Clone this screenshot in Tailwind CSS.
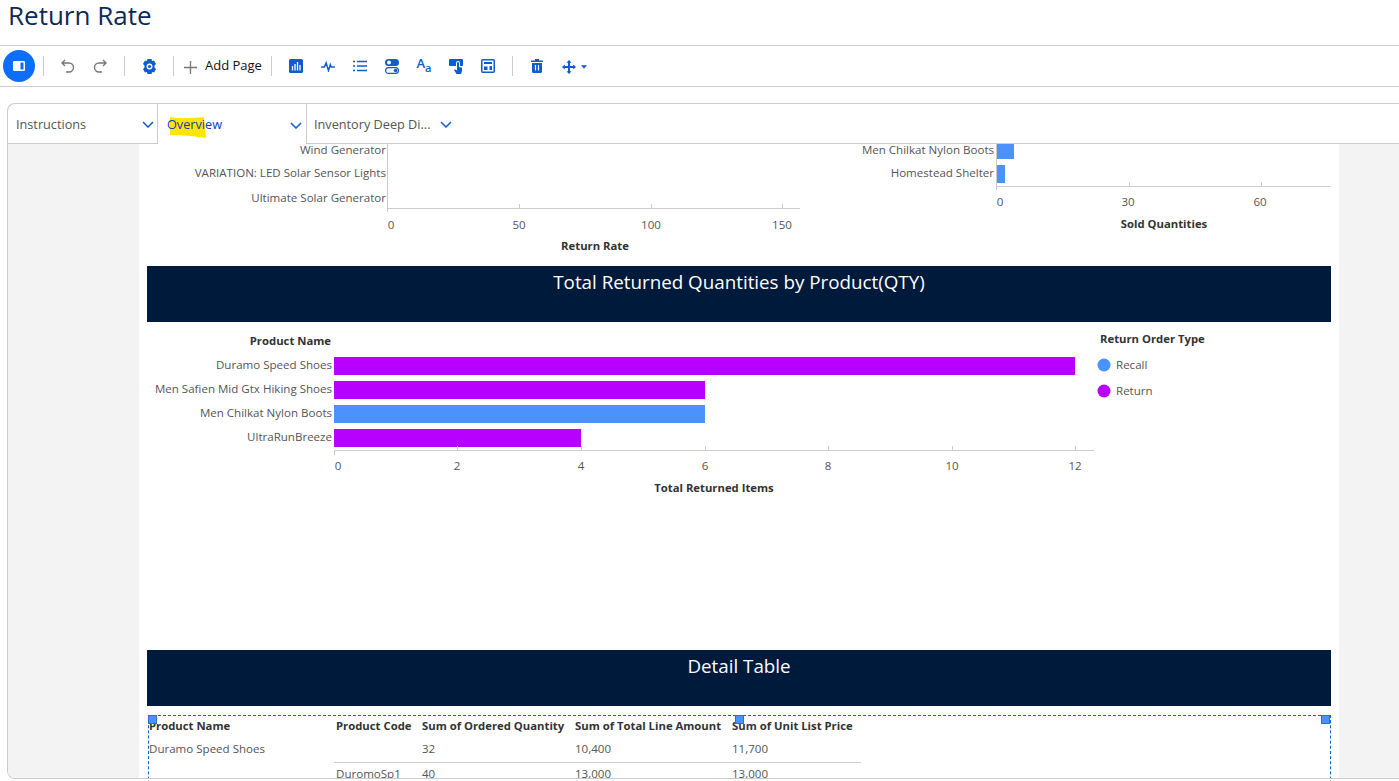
<!DOCTYPE html>
<html lang="en">
<head>
  <meta charset="UTF-8">
  <meta name="viewport" content="width=device-width, initial-scale=1.0">
  <title>Return Rate</title>
  <script src="https://cdn.jsdelivr.net/npm/@tailwindcss/browser@4"></script>
</head>
<body class="bg-white h-[781px] overflow-hidden font-['Open_Sans',sans-serif] text-[#555]">

  <!-- Title -->
  <div class="h-[46px] border-b border-[#ccc] pl-2 flex items-start">
    <h1 class="text-[26px] leading-[36px] -mt-[3px] text-[#0a2a57]">Return Rate</h1>
  </div>

  <!-- Toolbar -->
  <div class="h-[41px] border-b border-[#ccc] flex items-center pl-[3px]">
    <button class="w-8 h-8 rounded-full bg-[#0d6efd] flex items-center justify-center">
      <svg width="14" height="14" viewBox="0 0 14 14"><rect x="1" y="2" width="12" height="10" rx="1" fill="#fff"/><rect x="8.500" y="3.500" width="3" height="7" fill="#0d6efd"/></svg>
    </button>
    <div class="ml-2 w-px h-5 bg-[#ccc]"></div>
    <button class="ml-2 w-8 h-8 flex items-center justify-center">
      <svg width="16" height="16" viewBox="0 0 16 16" fill="none" stroke="#777" stroke-width="1.400"><path d="M5 2 2 5l3 3M2 5h7a4.500 4.500 0 0 1 0 9H6"/></svg>
    </button>
    <button class="w-8 h-8 flex items-center justify-center">
      <svg width="16" height="16" viewBox="0 0 16 16" fill="none" stroke="#777" stroke-width="1.400"><path d="M11 2l3 3-3 3M14 5H7a4.500 4.500 0 0 0 0 9h3"/></svg>
    </button>
    <div class="ml-2 w-px h-5 bg-[#ccc]"></div>
    <button class="ml-2 w-8 h-8 flex items-center justify-center">
      <svg width="13" height="15" viewBox="0 0 14 16"><path fill="#0f5bd0" d="M4.800 0h4.400l.5 2.200 2.200-.7L14 5.300l-1.600 1.600v2.200L14 10.700l-2.100 3.800-2.200-.7-.5 2.200H4.800l-.5-2.200-2.200.7L0 10.700l1.600-1.600V6.900L0 5.300l2.100-3.800 2.200.7z"/><circle cx="7" cy="8" r="3.200" fill="#fff"/><circle cx="7" cy="8" r="1.700" fill="#0f5bd0"/></svg>
    </button>
    <div class="ml-2 w-px h-5 bg-[#ccc]"></div>
    <svg class="ml-[10px] mt-[2px]" width="13" height="13" viewBox="0 0 13 13" stroke="#777" stroke-width="1.300"><path d="M6.500 0v13M0 6.500h13"/></svg>
    <span class="ml-2 text-[13px] text-[#111] w-[58px] whitespace-nowrap">Add Page</span>
    <div class="ml-2 w-px h-5 bg-[#ccc]"></div>
    <button class="ml-2 w-8 h-8 flex items-center justify-center">
      <svg width="14" height="14" viewBox="0 0 14 14"><rect width="14" height="14" rx="1.500" fill="#0f5bd0"/><path d="M3.500 7v4.500M6 5v6.500M8.500 3v8.500M11 6v5.500" stroke="#fff" stroke-width="1.300"/></svg>
    </button>
    <button class="w-8 h-8 flex items-center justify-center">
      <svg width="14" height="11" viewBox="0 0 15 12" fill="none" stroke="#0f5bd0" stroke-width="1.600"><path d="M0 6.500h3.500L5.500 2l2.500 8.500L10 4l1 2.500h4"/></svg>
    </button>
    <button class="w-8 h-8 flex items-center justify-center">
      <svg width="14" height="12" viewBox="0 0 14 12" stroke="#0f5bd0" stroke-width="1.500"><path d="M0 1.500h2M4 1.500h10M0 6h2M4 6h10M0 10.500h2M4 10.500h10"/></svg>
    </button>
    <button class="w-8 h-8 flex items-center justify-center">
      <svg width="14" height="15" viewBox="0 0 14 15"><rect width="14" height="7" rx="3.500" fill="#0f5bd0"/><circle cx="4" cy="3.500" r="2" fill="#fff"/><rect x=".6" y="8.600" width="12.800" height="5.800" rx="2.900" fill="#fff" stroke="#0f5bd0" stroke-width="1.200"/><circle cx="10.500" cy="11.500" r="1.800" fill="#0f5bd0"/></svg>
    </button>
    <button class="w-8 h-8 flex items-center justify-center">
      <span class="flex items-end text-[#0f5bd0] leading-none font-semibold"><span class="text-[13px] -translate-y-[3px]">A</span><span class="text-[11px]">a</span></span>
    </button>
    <button class="w-8 h-8 flex items-center justify-center">
      <svg width="14" height="15" viewBox="0 0 14 15"><path fill="#0f5bd0" d="M1 0h12a1 1 0 0 1 1 1v5a1 1 0 0 1-1 1h-2V4a2 2 0 0 0-4 0v3H1a1 1 0 0 1-1-1V1a1 1 0 0 1 1-1z"/><path fill="#0f5bd0" d="M8 4a1 1 0 0 1 2 0v4l3 .8V12l-1 3H7.500L5 11l1-.8 2 1.300z"/></svg>
    </button>
    <button class="w-8 h-8 flex items-center justify-center">
      <svg width="14" height="14" viewBox="0 0 14 14" fill="none" stroke="#0f5bd0" stroke-width="1.500"><rect x=".75" y=".75" width="12.500" height="12.500" rx="1"/><path d="M3 4h8" stroke-width="2"/><path d="M3 7.500h3.500v3.500H3zM8.500 7h2.500v4H8.500z" fill="#0f5bd0" stroke="none"/></svg>
    </button>
    <div class="ml-2 w-px h-5 bg-[#ccc]"></div>
    <button class="ml-2 w-8 h-8 flex items-center justify-center">
      <svg width="12" height="14" viewBox="0 0 12 14"><path fill="#0f5bd0" d="M4 0h4v1.500h4V3H0V1.500h4zM1 4h10v8.500a1.500 1.500 0 0 1-1.500 1.500h-7A1.500 1.500 0 0 1 1 12.500z"/><path d="M4.500 6v5.500M7.500 6v5.500" stroke="#fff" stroke-width="1.200"/></svg>
    </button>
    <button class="w-8 h-8 flex items-center justify-center">
      <svg class="mt-[2px]" width="14" height="14" viewBox="0 0 14 14"><path d="M7 0l2.500 2.800H8v3.200h3.200V4.500L14 7l-2.800 2.500V8H8v3.200h1.500L7 14l-2.500-2.800H6V8H2.800v1.500L0 7l2.800-2.500V6H6V2.800H4.500z" fill="#0f5bd0"/></svg>
    </button>
    <svg class="-ml-[4px] mt-[2px]" width="6" height="4" viewBox="0 0 7 4"><path d="M0 0h7L3.500 4z" fill="#0f5bd0"/></svg>
  </div>

  <!-- Report frame -->
  <div class="mt-4 ml-[7px] h-[676px] border-l border-t border-b border-[#ccc] rounded-tl-lg rounded-bl-lg overflow-hidden flex flex-col">

    <!-- Tabs -->
    <div class="h-10 shrink-0 flex text-[12.7px]">
      <div class="w-[150px] border-r border-b border-[#ccc] flex items-center justify-between pl-2 pr-[3px] pt-[2px]">
        <span>Instructions</span>
        <svg width="12" height="7" viewBox="0 0 12 7" fill="none" stroke="#0f5bd0" stroke-width="1.500"><path d="M1 1l5 5 5-5"/></svg>
      </div>
      <div class="w-[149px] border-r border-[#ccc] relative flex items-center justify-between pl-[9px] pr-[4px] pt-[2px] text-[#0a3cc0]">
        <svg class="absolute left-[11px] top-[13px]" width="37" height="21" viewBox="0 0 37 21"><path d="M1 0c10 2 24 1 34 0l2 21c-10-2-26-3-36-3z" fill="#ffe600"/></svg>
        <span class="relative">Overview</span>
        <svg width="12" height="7" viewBox="0 0 12 7" fill="none" stroke="#0f5bd0" stroke-width="1.500"><path d="M1 1l5 5 5-5"/></svg>
      </div>
      <div class="flex-1 border-b border-[#ccc] flex items-center pl-[7px] gap-[10px] pt-[2px]">
        <span>Inventory Deep Di...</span>
        <svg width="12" height="7" viewBox="0 0 12 7" fill="none" stroke="#0f5bd0" stroke-width="1.500"><path d="M1 1l5 5 5-5"/></svg>
      </div>
    </div>

    <!-- Canvas -->
    <div class="flex-1 bg-[#f3f3f3] min-h-0 pl-[131px] pr-[60px] overflow-hidden">
      <div class="bg-white h-full px-2">

        <!-- Top charts (scrolled, bars cut off by the tabs) -->
        <svg class="block" width="1184" height="122" viewBox="147 144 1184 122" font-size="11.550">
          <g fill="#555" text-anchor="end">
            <text x="386" y="153.500">Wind Generator</text>
            <text x="386" y="177">VARIATION: LED Solar Sensor Lights</text>
            <text x="386" y="201.500">Ultimate Solar Generator</text>
            <text x="994" y="153.500">Men Chilkat Nylon Boots</text>
            <text x="994" y="177">Homestead Shelter</text>
          </g>
          <path d="M387.500 144v68M388 208.500h412M519.500 204v5M651.500 204v5M782.500 204v5" stroke="#ccc" fill="none"/>
          <g fill="#555" text-anchor="middle">
            <text x="391" y="228.500">0</text>
            <text x="519" y="228.500">50</text>
            <text x="651" y="228.500">100</text>
            <text x="782" y="228.500">150</text>
          </g>
          <text x="595" y="250" text-anchor="middle" font-weight="700" font-size="11.300" fill="#333">Return Rate</text>
          <rect x="996" y="144" width="18" height="15" fill="#4b92ff"/>
          <rect x="996" y="165" width="9" height="18" fill="#4b92ff"/>
          <path d="M996.500 144v46M996 186.500h335M1129.500 182v5M1261.500 182v5" stroke="#ccc" fill="none"/>
          <g fill="#555" text-anchor="middle">
            <text x="1000" y="206">0</text>
            <text x="1128" y="206">30</text>
            <text x="1260" y="206">60</text>
          </g>
          <text x="1164" y="228" text-anchor="middle" font-weight="700" font-size="11.300" fill="#333">Sold Quantities</text>
        </svg>

        <div class="h-14 bg-[#001a3b] text-white text-center text-[18.800px] leading-[32px]">Total Returned Quantities by Product(QTY)</div>

        <!-- Returned quantities chart -->
        <svg class="block" width="1184" height="328" viewBox="147 322 1184 328" font-size="11.550">
          <text x="331" y="345" text-anchor="end" font-weight="700" font-size="11.300" fill="#333">Product Name</text>
          <g fill="#555" text-anchor="end">
            <text x="332" y="369">Duramo Speed Shoes</text>
            <text x="332" y="393">Men Safien Mid Gtx Hiking Shoes</text>
            <text x="332" y="417">Men Chilkat Nylon Boots</text>
            <text x="332" y="441">UltraRunBreeze</text>
          </g>
          <rect x="334" y="357" width="741" height="18" fill="#b800ff"/>
          <rect x="334" y="381" width="371" height="18" fill="#b800ff"/>
          <rect x="334" y="405" width="371" height="18" fill="#4b92ff"/>
          <rect x="334" y="429" width="247" height="18" fill="#b800ff"/>
          <path d="M334 450.500h760M334.500 450v5M457.500 446v5M581.500 446v5M705.500 446v5M828.500 446v5M952.500 446v5M1075.500 446v5" stroke="#ccc" fill="none"/>
          <g fill="#555" text-anchor="middle">
            <text x="338" y="470">0</text>
            <text x="457" y="470">2</text>
            <text x="581" y="470">4</text>
            <text x="705" y="470">6</text>
            <text x="828" y="470">8</text>
            <text x="952" y="470">10</text>
            <text x="1075" y="470">12</text>
          </g>
          <text x="714" y="492" text-anchor="middle" font-weight="700" font-size="11.300" fill="#333">Total Returned Items</text>
          <text x="1100" y="343" font-weight="700" font-size="11.300" fill="#333">Return Order Type</text>
          <circle cx="1104" cy="365" r="6.500" fill="#4b92ff"/>
          <circle cx="1104" cy="391" r="6.500" fill="#b800ff"/>
          <text x="1116" y="369" fill="#555">Recall</text>
          <text x="1116" y="395" fill="#555">Return</text>
        </svg>

        <div class="h-14 bg-[#001a3b] text-white text-center text-[18.800px] leading-[32px]">Detail Table</div>

        <!-- Detail table with selection outline -->
        <div class="relative mt-[9px] ml-px h-[80px] border-t border-l border-r border-dashed border-[#0f5bd0]">
          <span class="absolute -left-px -top-px w-[9px] h-[9px] bg-[#4b92ff] border border-[#2a6fd8]"></span>
          <span class="absolute left-[586px] -top-px w-[9px] h-[9px] bg-[#4b92ff] border border-[#2a6fd8]"></span>
          <span class="absolute right-0 -top-px w-[9px] h-[9px] bg-[#4b92ff] border border-[#2a6fd8]"></span>
          <table class="text-[11.550px] text-left border-collapse table-fixed w-[712px]">
            <colgroup>
              <col class="w-[185px]">
              <col class="w-[86px]">
              <col class="w-[153px]">
              <col class="w-[157px]">
              <col class="w-[131px]">
            </colgroup>
            <thead class="text-[#333] text-[11.300px]">
              <tr class="h-5">
                <th class="font-bold whitespace-nowrap">Product Name</th>
                <th class="pl-[2px] font-bold whitespace-nowrap">Product Code</th>
                <th class="pl-[2px] font-bold whitespace-nowrap">Sum of Ordered Quantity</th>
                <th class="pl-[2px] font-bold whitespace-nowrap">Sum of Total Line Amount</th>
                <th class="pl-[2px] font-bold whitespace-nowrap">Sum of Unit List Price</th>
              </tr>
            </thead>
            <tbody>
              <tr class="h-[26px]">
                <td class="whitespace-nowrap">Duramo Speed Shoes</td>
                <td class="border-b border-[#ccc]"></td>
                <td class="pl-[2px] border-b border-[#ccc]">32</td>
                <td class="pl-[2px] border-b border-[#ccc]">10,400</td>
                <td class="pl-[2px] border-b border-[#ccc]">11,700</td>
              </tr>
              <tr class="h-[22px]">
                <td></td>
                <td class="pl-[2px] whitespace-nowrap">DuromoSp1</td>
                <td class="pl-[2px]">40</td>
                <td class="pl-[2px]">13,000</td>
                <td class="pl-[2px]">13,000</td>
              </tr>
            </tbody>
          </table>
        </div>
      </div>
    </div>
  </div>
</body>
</html>
